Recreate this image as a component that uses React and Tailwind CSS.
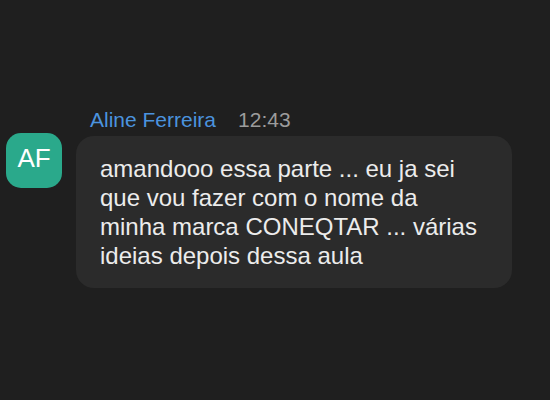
import React from 'react';

const lines = [
  'amandooo essa parte ... eu ja sei',
  'que vou fazer com o nome da',
  'minha marca CONEQTAR ... várias',
  'ideias depois dessa aula',
];

function Avatar({ initials }) {
  return (
    <div className="mt-[25px] flex h-[55px] w-[56px] flex-none items-center justify-center rounded-[15px] bg-[#2aa98b] pb-[4px] text-[26px] text-white">
      {initials}
    </div>
  );
}

function Message({ author, time, children }) {
  return (
    <div className="flex gap-[14px]">
      <Avatar initials="AF" />
      <div className="flex flex-col">
        <div className="flex h-[24px] items-center gap-[22px] pl-[14px] text-[21px] leading-[24px]">
          <span className="text-[#4b93de]">{author}</span>
          <span className="text-[#9c9c9c]">{time}</span>
        </div>
        <div className="mt-[4px] w-[436px] rounded-[18px] bg-[#2b2b2b] px-[24px] py-[18px] text-[24px] leading-[29px] text-[#ececec]">
          {children}
        </div>
      </div>
    </div>
  );
}

export default function App() {
  return (
    <div
      className="h-[400px] w-[550px] overflow-hidden bg-[#1f1f1f] pl-[6px] pt-[108px]"
      style={{ fontFamily: '"Liberation Sans", Arial, sans-serif' }}
    >
      <Message author="Aline Ferreira" time="12:43">
        {lines.map((line) => (
          <div key={line}>{line}</div>
        ))}
      </Message>
    </div>
  );
}
